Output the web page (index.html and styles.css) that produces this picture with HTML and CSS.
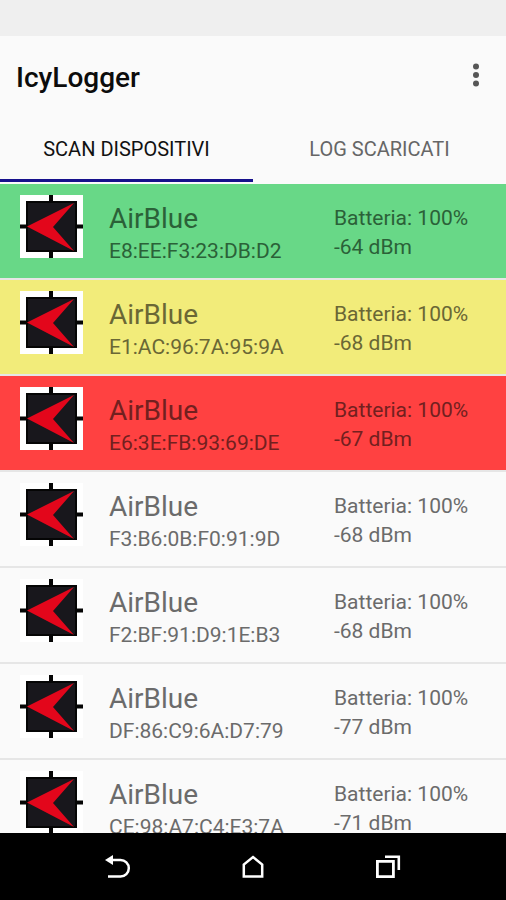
FILE: index.html
```html
<!DOCTYPE html>
<html lang="it">
<head>
<meta charset="utf-8">
<meta name="viewport" content="width=device-width, initial-scale=1">
<title>IcyLogger</title>
<link rel="stylesheet" href="styles.css">
</head>
<body>
<svg class="sprite" aria-hidden="true">
  <symbol id="logger" viewBox="0 0 63 63">
    <path d="M29 0h4v63h-4zM0 29.500h63v4H0z" fill="#050505"/>
    <path d="M6 6h51v51H6z" fill="#050505"/>
    <path d="M8 8h47v47H8z" fill="#18171c"/>
    <path d="M7 31.500L54 8L33 32L54 56z" fill="#e3061b"/>
  </symbol>
</svg>
<div class="status-bar"></div>
<header class="app-bar">
  <h1 class="title">IcyLogger</h1>
  <button class="menu" type="button" aria-label="Menu">
    <svg width="8" height="24" viewBox="0 0 8 24" fill="#565656"><circle cx="4" cy="3.500" r="3"/><circle cx="4" cy="12" r="3"/><circle cx="4" cy="20.500" r="3"/></svg>
  </button>
</header>
<div class="tabs" role="tablist">
  <button class="tab tab-active" type="button" role="tab" aria-selected="true">SCAN DISPOSITIVI</button>
  <button class="tab" type="button" role="tab" aria-selected="false">LOG SCARICATI</button>
</div>
<main class="content">
  <ul class="devices">
    <li class="device green">
      <svg class="logo"><use href="#logger"/></svg>
      <div class="identity"><h2 class="name">AirBlue</h2><p class="address">E8:EE:F3:23:DB:D2</p></div>
      <div class="readings"><p>Batteria: 100%</p><p>-64 dBm</p></div>
    </li>
    <li class="device yellow">
      <svg class="logo"><use href="#logger"/></svg>
      <div class="identity"><h2 class="name">AirBlue</h2><p class="address">E1:AC:96:7A:95:9A</p></div>
      <div class="readings"><p>Batteria: 100%</p><p>-68 dBm</p></div>
    </li>
    <li class="device red">
      <svg class="logo"><use href="#logger"/></svg>
      <div class="identity"><h2 class="name">AirBlue</h2><p class="address">E6:3E:FB:93:69:DE</p></div>
      <div class="readings"><p>Batteria: 100%</p><p>-67 dBm</p></div>
    </li>
    <li class="device">
      <svg class="logo"><use href="#logger"/></svg>
      <div class="identity"><h2 class="name">AirBlue</h2><p class="address">F3:B6:0B:F0:91:9D</p></div>
      <div class="readings"><p>Batteria: 100%</p><p>-68 dBm</p></div>
    </li>
    <li class="device">
      <svg class="logo"><use href="#logger"/></svg>
      <div class="identity"><h2 class="name">AirBlue</h2><p class="address">F2:BF:91:D9:1E:B3</p></div>
      <div class="readings"><p>Batteria: 100%</p><p>-68 dBm</p></div>
    </li>
    <li class="device">
      <svg class="logo"><use href="#logger"/></svg>
      <div class="identity"><h2 class="name">AirBlue</h2><p class="address">DF:86:C9:6A:D7:79</p></div>
      <div class="readings"><p>Batteria: 100%</p><p>-77 dBm</p></div>
    </li>
    <li class="device">
      <svg class="logo"><use href="#logger"/></svg>
      <div class="identity"><h2 class="name">AirBlue</h2><p class="address">CE:98:A7:C4:E3:7A</p></div>
      <div class="readings"><p>Batteria: 100%</p><p>-71 dBm</p></div>
    </li>
  </ul>
</main>
<nav class="nav-bar" aria-label="Sistema">
  <button class="nav-button" type="button" aria-label="Indietro">
    <svg width="26" height="24" viewBox="0 0 26 24"><path d="M6 5H15.500a8.300 8.300 0 0 1 0 16.600H3" fill="none" stroke="#fff" stroke-width="2.500"/><path d="M0 5L8 0V10z" fill="#fff"/></svg>
  </button>
  <button class="nav-button" type="button" aria-label="Home">
    <svg width="26" height="24" viewBox="0 0 26 24"><path d="M3.800 21.600V9.500L13 2L22.200 9.500V21.600z" fill="none" stroke="#fff" stroke-width="2.500"/></svg>
  </button>
  <button class="nav-button" type="button" aria-label="Recenti">
    <svg width="26" height="24" viewBox="0 0 26 24" fill="none" stroke="#fff"><path d="M2.400 6.400h16v15.200h-16z" stroke-width="2.800"/><path d="M10 1.800H23.800V15" stroke-width="2.600"/></svg>
  </button>
</nav>
</body>
</html>
```
FILE: styles.css
```css
* {
  box-sizing: border-box;
}

body {
  display: flex;
  flex-direction: column;
  height: 100vh;
  margin: 0;
  background: #fafafa;
  color: #6b6b6b;
  font-family: Roboto, "Liberation Sans", sans-serif;
}

h1,
h2,
p,
ul {
  margin: 0;
  padding: 0;
  font-weight: 400;
}

button {
  padding: 0;
  border: 0;
  background: none;
  font: inherit;
}

.sprite {
  position: absolute;
  width: 0;
  height: 0;
}

.status-bar {
  flex: none;
  height: 36px;
  background: #efefef;
}

.app-bar {
  display: flex;
  flex: none;
  align-items: center;
  justify-content: space-between;
  height: 84px;
  padding: 0 16px;
}

.title {
  color: #0c0c0c;
  font-size: 28px;
  font-weight: 500;
  line-height: 32px;
}

.menu {
  display: flex;
  justify-content: center;
  width: 28px;
  padding-bottom: 6px;
}

.tabs {
  display: flex;
  flex: none;
  height: 64px;
  padding-bottom: 2px;
}

.tab {
  flex: 1;
  padding-bottom: 2px;
  border-bottom: 3px solid transparent;
  color: #666;
  font-size: 20px;
  line-height: 24px;
}

.tab-active {
  border-bottom-color: #16108c;
  color: #111;
}

.content {
  flex: 1;
  min-height: 0;
  overflow: hidden;
}

.devices {
  list-style: none;
}

.device {
  display: flex;
  align-items: flex-start;
  height: 96px;
  padding: 11px 20px 0;
  border-bottom: 2px solid #e6e6e6;
}

.logo {
  flex: none;
  width: 63px;
  height: 63px;
  background: #fff;
}

.identity {
  flex: 1;
  padding: 6px 0 0 26px;
}

.name {
  font-size: 28px;
  line-height: 36px;
}

.address,
.readings {
  font-size: 21px;
  line-height: 29px;
}

.readings {
  width: 152px;
  padding-top: 9px;
}

.green {
  background: #68d887;
  color: #2b6138;
}

.yellow {
  background: #f2ec7a;
  color: #6a6735;
}

.red {
  background: #ff4141;
  color: #72201f;
}

.nav-bar {
  display: flex;
  flex: none;
  justify-content: center;
  height: 67px;
  background: #000;
}

.nav-button {
  display: flex;
  align-items: center;
  justify-content: center;
  width: 135px;
}
```
